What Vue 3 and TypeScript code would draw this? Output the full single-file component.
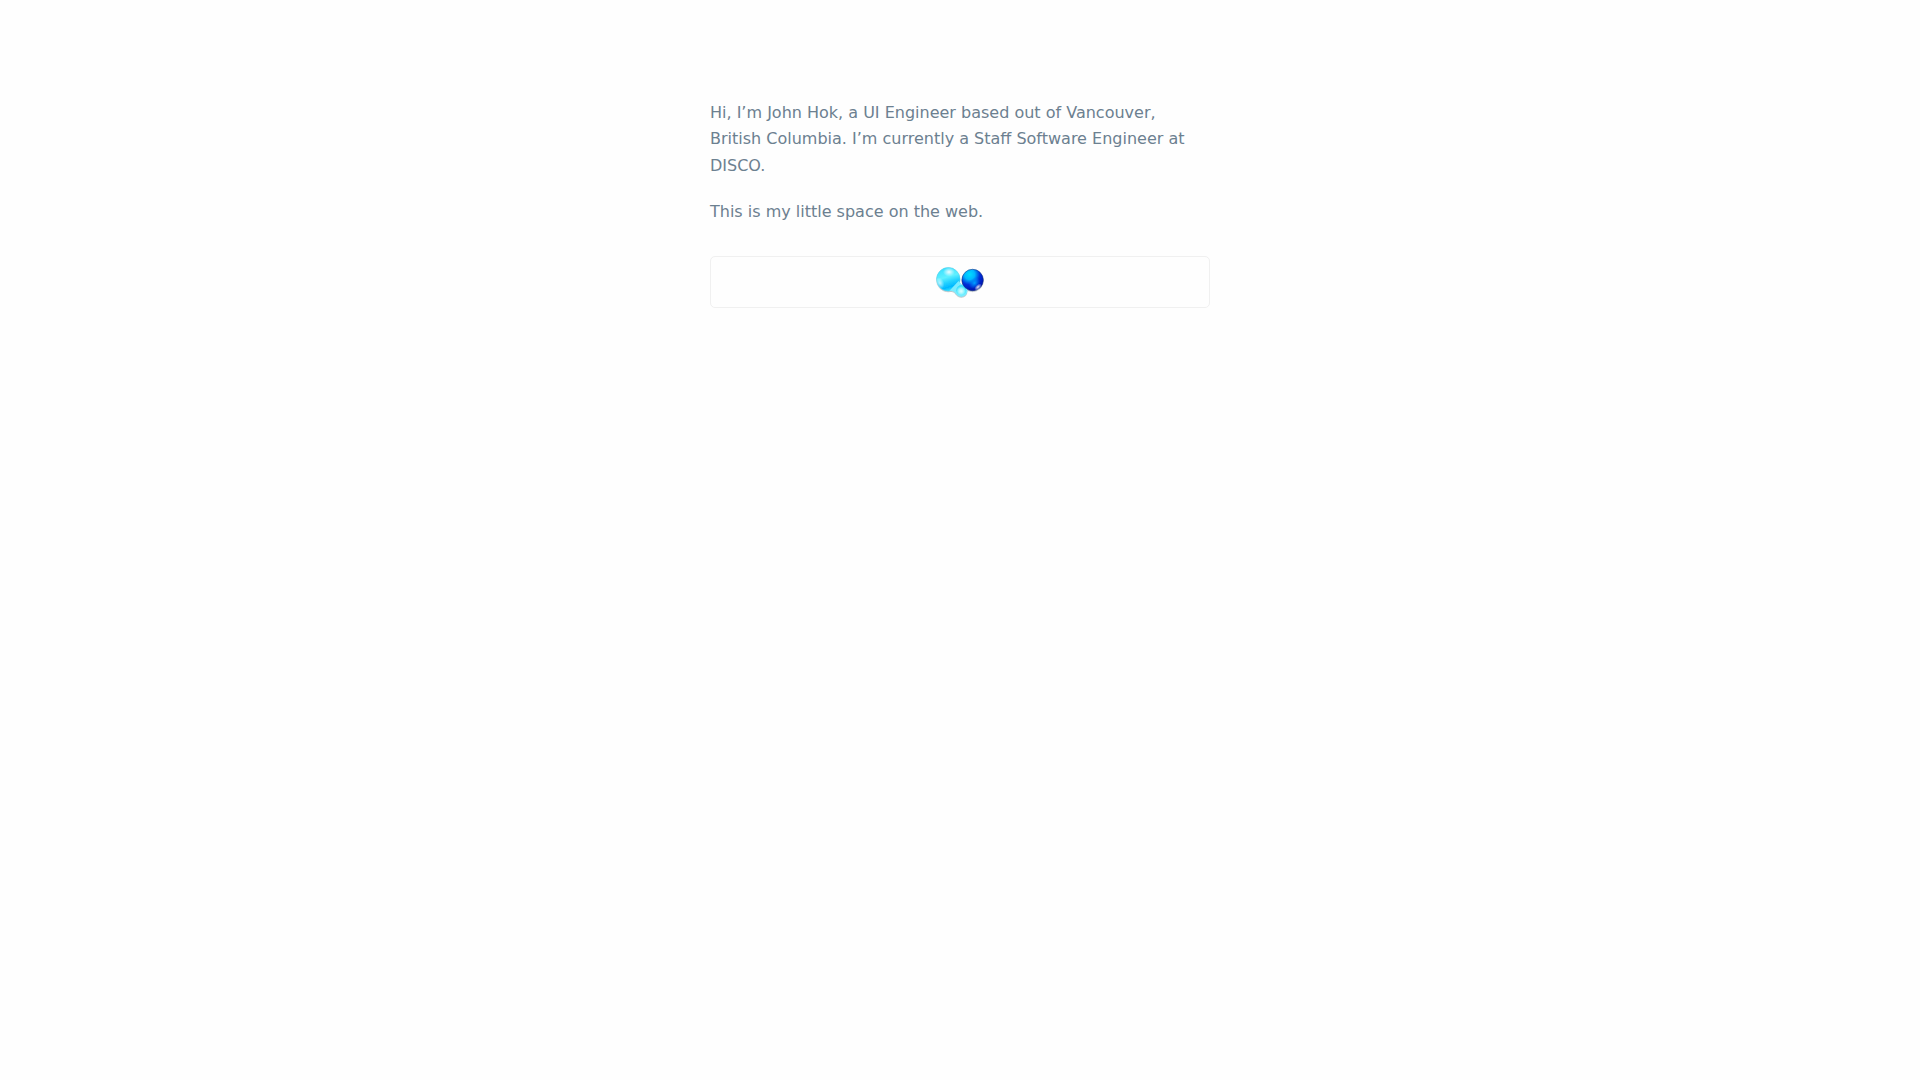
<script setup lang="ts">
const paragraphs: string[] = [
  'Hi, I’m John Hok, a UI Engineer based out of Vancouver, British Columbia. I’m currently a Staff Software Engineer at DISCO.',
  'This is my little space on the web.',
]
</script>

<template>
  <main class="page">
    <section class="intro">
      <p v-for="text in paragraphs" :key="text">{{ text }}</p>
    </section>
    <a class="card" href="#" aria-label="Bubbles">
      <svg class="bubbles" width="48" height="32" viewBox="0 0 48 32" aria-hidden="true">
        <defs>
          <linearGradient id="sky" x1="0.35" y1="0" x2="0.65" y2="1">
            <stop offset="0" stop-color="#38e0ff" />
            <stop offset="0.4" stop-color="#60f0ff" />
            <stop offset="0.6" stop-color="#28d4ff" />
            <stop offset="0.82" stop-color="#00b8ff" />
            <stop offset="1" stop-color="#40ecff" />
          </linearGradient>
          <radialGradient id="glow">
            <stop offset="0" stop-color="#fff" stop-opacity="0.9" />
            <stop offset="1" stop-color="#fff" stop-opacity="0" />
          </radialGradient>
          <radialGradient id="deep" cx="0.36" cy="0.24" r="0.8">
            <stop offset="0" stop-color="#00dcff" />
            <stop offset="0.3" stop-color="#00b8ff" />
            <stop offset="0.6" stop-color="#0030d8" />
            <stop offset="1" stop-color="#0010a8" />
          </radialGradient>
          <radialGradient id="azure">
            <stop offset="0" stop-color="#00a4ff" />
            <stop offset="1" stop-color="#0080ff" stop-opacity="0" />
          </radialGradient>
          <radialGradient id="drop" cx="0.5" cy="0.6" r="0.6">
            <stop offset="0" stop-color="#b8faff" />
            <stop offset="0.6" stop-color="#70f0ff" />
            <stop offset="1" stop-color="#20d8fc" />
          </radialGradient>
          <filter id="shade" x="-20%" y="-20%" width="140%" height="150%">
            <feDropShadow dx="0" dy="0.6" stdDeviation="0.7" flood-color="#204050" flood-opacity="0.5" />
          </filter>
        </defs>
        <g filter="url(#shade)">
          <circle cx="12.3" cy="13.2" r="11.7" fill="url(#sky)" stroke="#50d4f0" stroke-width="0.5" />
          <path d="M13.5 24.7Q18 24.5 20 28L28 21L22.5 15Z" fill="#7cecff" />
          <circle cx="25.3" cy="24.6" r="6.2" fill="#7cecff" />
          <circle cx="25.3" cy="24.3" r="5" fill="url(#drop)" />
          <circle cx="36.6" cy="14" r="10.7" fill="url(#deep)" stroke="#142c80" stroke-width="0.5" />
        </g>
        <ellipse cx="13" cy="6" rx="6" ry="4.5" fill="url(#glow)" />
        <ellipse cx="4" cy="17" rx="4" ry="6" fill="url(#glow)" opacity="0.75" transform="rotate(-25 4 17)" />
        <ellipse cx="38.5" cy="17" rx="6.5" ry="5" fill="url(#azure)" transform="rotate(-45 38.5 17)" />
        <ellipse cx="42" cy="21" rx="4.5" ry="2.4" fill="url(#glow)" transform="rotate(-42 42 21)" />
        <ellipse cx="25" cy="25" rx="4" ry="4" fill="url(#glow)" opacity="0.6" />
      </svg>
    </a>
  </main>
</template>

<style>
body {
  background: #fefefe;
}
</style>

<style scoped>
.page {
  box-sizing: border-box;
  max-width: 500px;
  margin: 0 auto;
  padding-top: 100px;
  color: #6c8090;
  font-family: "DejaVu Sans", sans-serif;
  font-size: 16px;
  line-height: 1.65;
}

.intro {
  display: flex;
  flex-direction: column;
  gap: 20px;
  margin-bottom: 30px;
}

.intro p {
  margin: 0;
}

.card {
  display: flex;
  justify-content: center;
  padding: 9px;
  border: 1px solid #f0f0f0;
  border-radius: 5px;
}

.bubbles {
  display: block;
}
</style>
